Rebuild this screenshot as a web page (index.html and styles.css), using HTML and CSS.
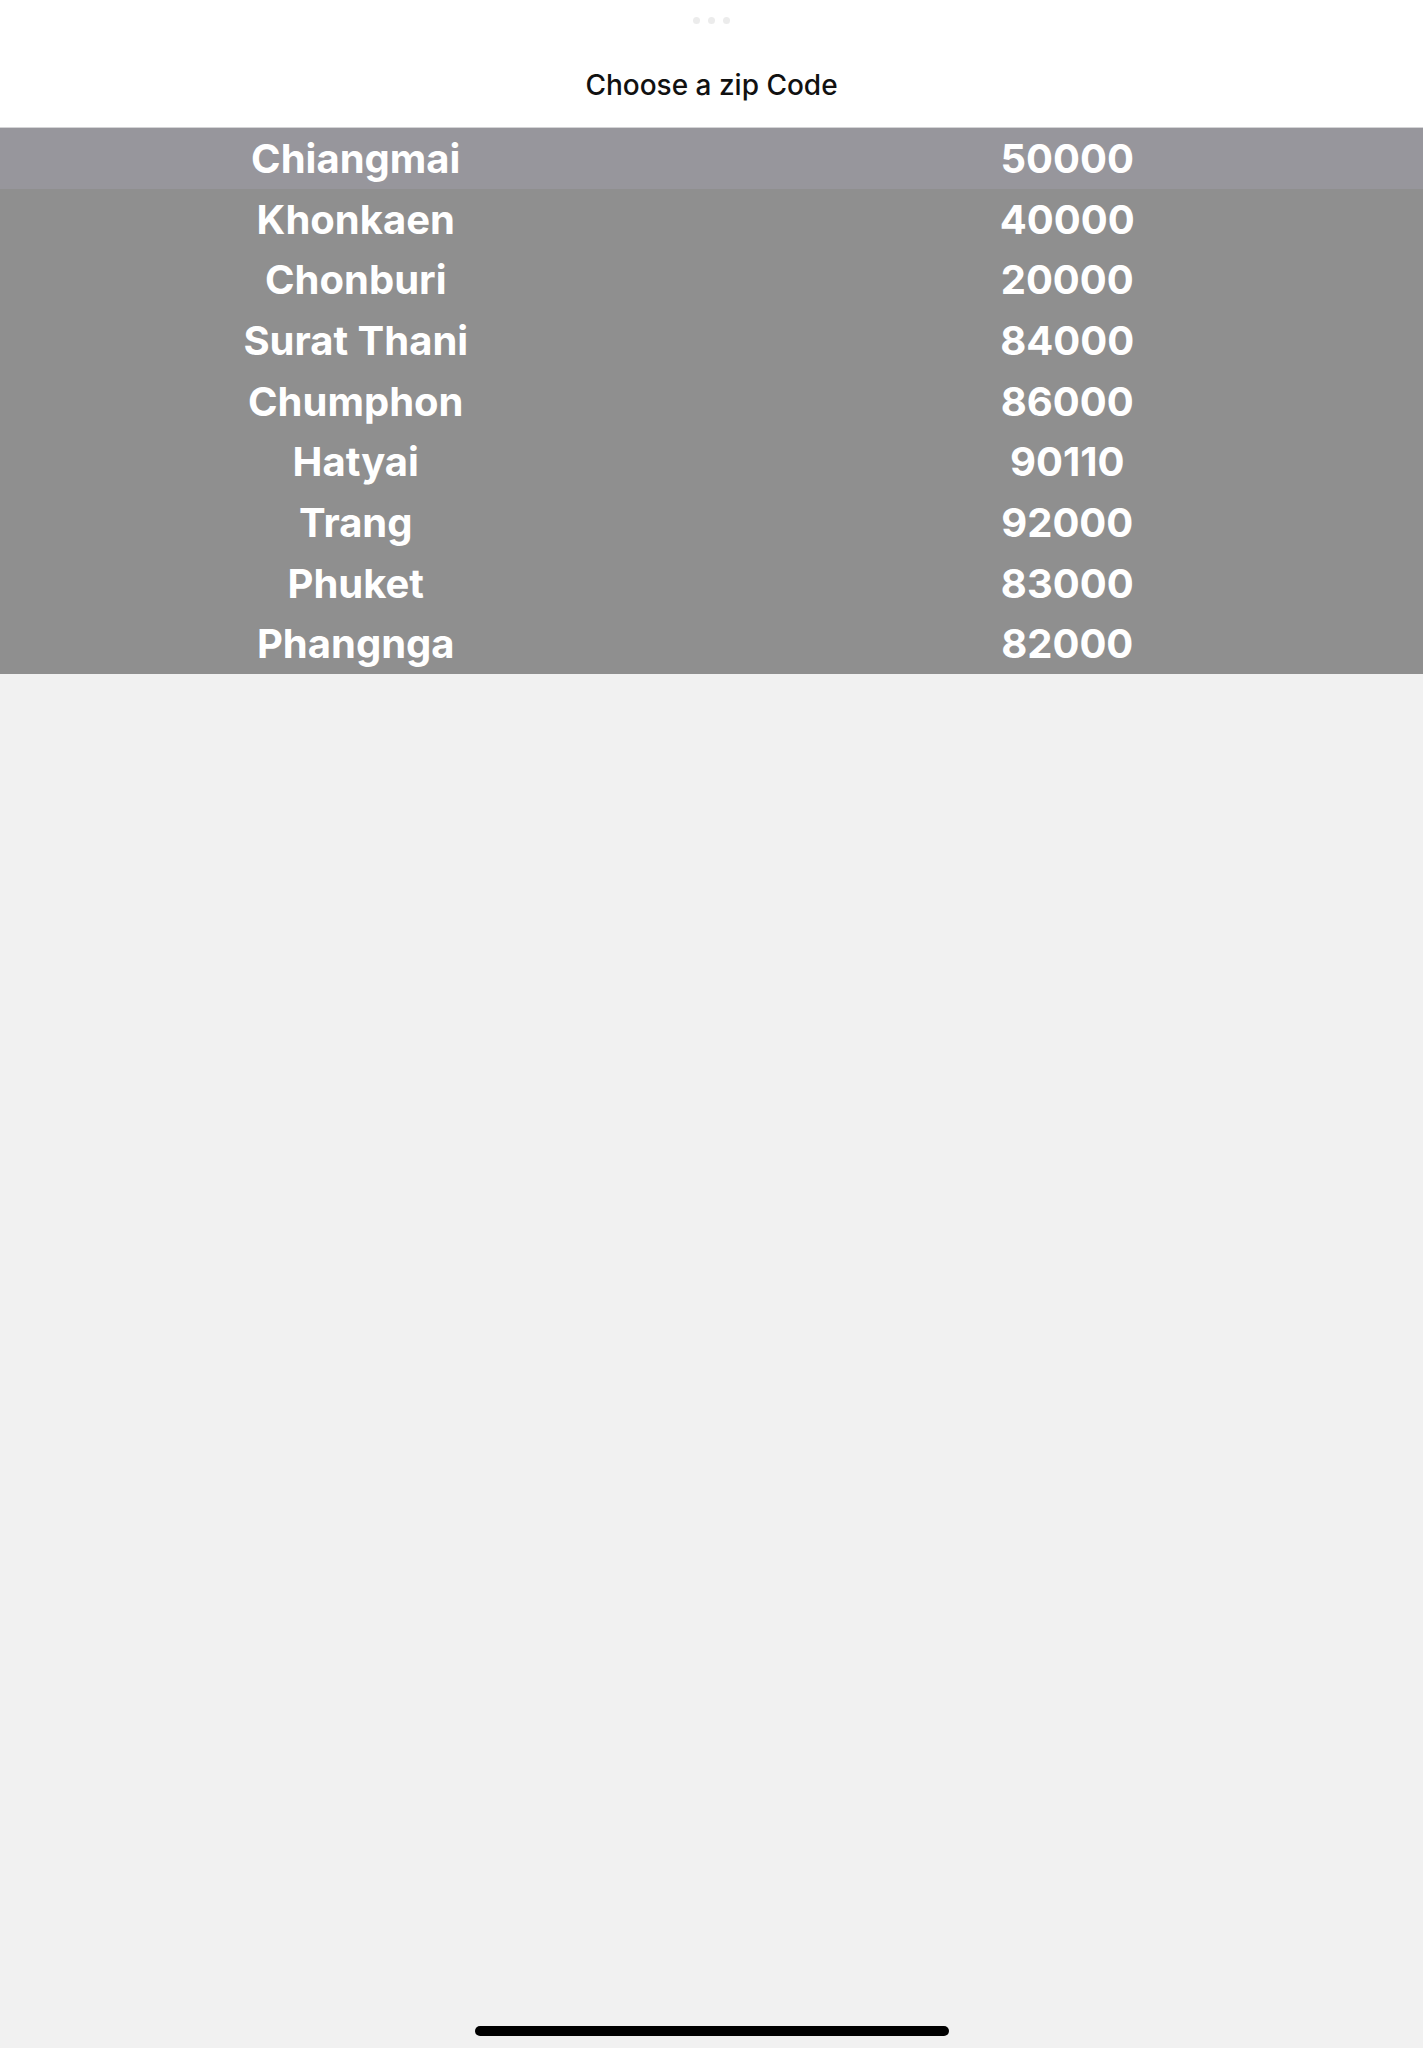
FILE: index.html
```html
<!DOCTYPE html>
<html>
<head>
<meta charset="utf-8">
<link rel="stylesheet" href="styles.css">
</head>
<body>
<div class="screen">
  <header class="header">
    <div class="dots"><span class="dot"></span><span class="dot"></span><span class="dot"></span></div>
    <h1 class="title">Choose a zip Code</h1>
  </header>
  <div class="picker">
    <div class="row row-selected"><div class="cell">Chiangmai</div><div class="cell">50000</div></div>
    <div class="row"><div class="cell">Khonkaen</div><div class="cell">40000</div></div>
    <div class="row"><div class="cell">Chonburi</div><div class="cell">20000</div></div>
    <div class="row"><div class="cell">Surat Thani</div><div class="cell">84000</div></div>
    <div class="row"><div class="cell">Chumphon</div><div class="cell">86000</div></div>
    <div class="row"><div class="cell">Hatyai</div><div class="cell">90110</div></div>
    <div class="row"><div class="cell">Trang</div><div class="cell">92000</div></div>
    <div class="row"><div class="cell">Phuket</div><div class="cell">83000</div></div>
    <div class="row"><div class="cell">Phangnga</div><div class="cell">82000</div></div>
  </div>
  <div class="spacer"></div>
  <div class="home-area"><div class="home-indicator"></div></div>
</div>
</body>
</html>
```
FILE: styles.css
```css
html, body {
  margin: 0;
  padding: 0;
}
body {
  background: #f1f1f1;
  font-family: Inter, "Liberation Sans", sans-serif;
}
.screen {
  width: 1423px;
  height: 2048px;
  display: flex;
  flex-direction: column;
  background: #f1f1f1;
}
.header {
  height: 127px;
  background: #ffffff;
  border-bottom: 1px solid #d4d4d6;
  display: flex;
  flex-direction: column;
  align-items: center;
}
.dots {
  display: flex;
  gap: 8px;
  margin-top: 17px;
}
.dot {
  width: 7px;
  height: 7px;
  border-radius: 50%;
  background: #ececec;
}
.title {
  margin: 44px 0 0 0;
  font-size: 28px;
  font-weight: 500;
  color: #111111;
  line-height: 34px;
}
.picker {
  height: 546px;
  background: #8f8f8f;
  display: flex;
  flex-direction: column;
}
.row {
  flex: 1;
  display: grid;
  grid-template-columns: 1fr 1fr;
  align-items: center;
}
.row-selected {
  background: #97969c;
}
.cell {
  text-align: center;
  color: #ffffff;
  font-size: 40px;
  font-weight: 700;
}
.spacer {
  flex: 1;
}
.home-area {
  height: 22px;
  display: flex;
  justify-content: center;
}
.home-indicator {
  width: 474px;
  height: 10px;
  border-radius: 5px;
  background: #000000;
}
```
